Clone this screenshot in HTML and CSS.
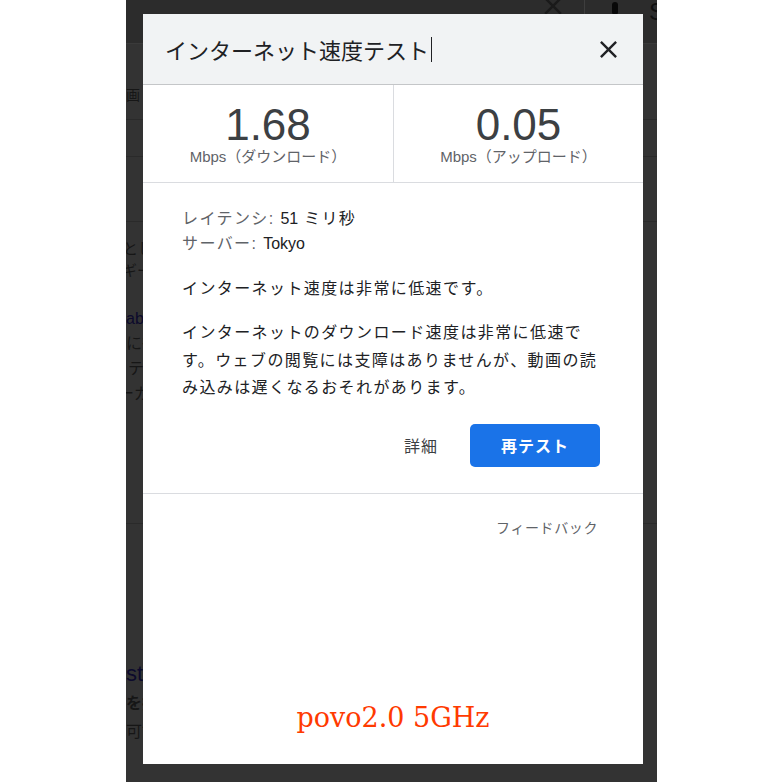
FILE: index.html
```html
<!DOCTYPE html>
<html lang="ja">
<head>
<meta charset="utf-8">
<title>インターネット速度テスト</title>
<link rel="stylesheet" href="styles.css">
</head>
<body>
<div class="frame">
  <div class="stage">
    <div class="page">
      <div class="pg-top">
        <svg class="pg-clear" viewBox="0 0 24 24" width="30" height="30"><path d="M19 6.41L17.59 5 12 10.59 6.41 5 5 6.41 10.59 12 5 17.59 6.41 19 12 13.41 17.59 19 19 17.59 13.41 12z" fill="#1a1a1a"/></svg>
        <span class="pg-divider"></span>
        <svg class="pg-mic" viewBox="0 0 12 20" width="12" height="20"><rect x="3" y="0" width="6" height="13" rx="3" fill="#080808"/></svg>
        <span class="pg-s">S</span>
      </div>
      <div class="pg-tabs"><span class="pg-tab">動画</span></div>
      <div class="pg-row pg-row-a"></div>
      <div class="pg-row pg-row-b"></div>
      <div class="pg-text pg-t1"><span class="cut">ことし</span><br><span class="cut2">ギー</span></div>
      <div class="pg-text pg-t2">
        <span class="pg-link">ab</span><br>
        <span>に彼</span><br>
        <span class="cut3">テ</span><br>
        <span class="cut4">ーガ</span>
      </div>
      <div class="pg-rule"></div>
      <div class="pg-text pg-t3">
        <span class="pg-link pg-big">st</span><br>
        <span class="pg-bold">を推</span><br>
        <span>可能</span>
      </div>
    </div>

    <section class="dialog">
      <header class="dlg-head">
        <h1 class="dlg-title">インターネット速度テスト<span class="caret"></span></h1>
        <svg class="dlg-close" viewBox="0 0 24 24" width="29" height="29"><path d="M19 6.41L17.59 5 12 10.59 6.41 5 5 6.41 10.59 12 5 17.59 6.41 19 12 13.41 17.59 19 19 17.59 13.41 12z" fill="#202124"/></svg>
      </header>

      <div class="stats">
        <div class="stat">
          <div class="num">1.68</div>
          <div class="unit">Mbps（ダウンロード）</div>
        </div>
        <div class="stat">
          <div class="num">0.05</div>
          <div class="unit">Mbps（アップロード）</div>
        </div>
      </div>

      <div class="dlg-body">
        <div class="info">
          <p><span class="lbl">レイテンシ:</span> <span class="lat">51</span> ミリ秒</p>
          <p><span class="lbl">サーバー:</span> <span class="lat">Tokyo</span></p>
        </div>
        <p class="msg">インターネット速度は非常に低速です。</p>
        <p class="msg msg-long">インターネットのダウンロード速度は非常に低速です。ウェブの閲覧には支障はありませんが、動画の読み込みは遅くなるおそれがあります。</p>
        <div class="actions">
          <span class="btn-text">詳細</span>
          <button class="btn-primary">再テスト</button>
        </div>
      </div>

      <div class="dlg-sep"></div>
      <div class="dlg-foot">フィードバック</div>
      <div class="caption">povo2.0 5GHz</div>
    </section>
  </div>
</div>
</body>
</html>
```

FILE: styles.css
```css
* { box-sizing: border-box; }
html, body { margin: 0; padding: 0; background: #fff; }
p, h1 { margin: 0; }

.frame {
  width: 782px;
  height: 782px;
  display: flex;
  padding-left: 126px;
}

.stage {
  position: relative;
  width: 531px;
  height: 782px;
  background: #333333;
  overflow: hidden;
  font-family: "Liberation Sans", "Noto Sans CJK JP", sans-serif;
}

/* dimmed page behind the dialog */
.page {
  display: flex;
  flex-direction: column;
  color: #161616;
}
.pg-top {
  position: relative;
  height: 44px;
  background: #2c2c2c;
  border-bottom: 1px solid #3a3a3a;
}
.pg-clear { position: absolute; left: 412px; top: -9px; }
.pg-divider { position: absolute; left: 458px; top: 0; width: 1px; height: 30px; background: #3e3e3e; }
.pg-mic { position: absolute; left: 483px; top: 2px; }
.pg-s { position: absolute; left: 523px; top: -2px; font-size: 24px; color: #101010; }

.pg-tabs {
  height: 76px;
  border-bottom: 1px solid #2a2a2a;
  font-size: 14px;
  padding-top: 40px;
}
.pg-tab { margin-left: -14px; }
.pg-row { border-bottom: 1px solid #2a2a2a; }
.pg-row-a { height: 37px; }
.pg-row-b { height: 65px; }

.pg-text { font-size: 15px; line-height: 22px; }
.pg-t1 { margin-top: 16px; }
.cut { margin-left: -18px; }
.cut2 { margin-left: -4px; }
.pg-t2 { margin-top: 24px; line-height: 25px; font-size: 16px; }
.pg-link { color: #0c0a2c; }
.cut3 { margin-left: 2px; }
.cut4 { margin-left: -8px; }
.pg-rule { margin-top: 117px; border-top: 1px solid #2a2a2a; }
.pg-t3 { margin-top: 136px; line-height: 28px; font-size: 16px; }
.pg-big { font-size: 22px; }
.pg-bold { font-weight: bold; }

/* dialog */
.dialog {
  position: absolute;
  left: 17px;
  top: 14px;
  width: 500px;
  height: 750px;
  background: #fff;
  color: #202124;
}

.dlg-head {
  height: 71px;
  background: #f1f3f4;
  border-bottom: 1px solid #c4c6c8;
  display: flex;
  align-items: center;
  justify-content: space-between;
  padding: 0 20px 0 22px;
}
.dlg-title {
  font-family: "Noto Sans CJK JP", sans-serif;
  font-weight: normal;
  font-size: 22px;
  line-height: 28px;
  color: #202124;
  display: flex;
  align-items: center;
}
.caret {
  display: inline-block;
  width: 1px;
  height: 25px;
  background: #202124;
  margin-left: 2px;
}
.dlg-close { display: block; }

.stats {
  display: grid;
  grid-template-columns: 1fr 1fr;
  height: 98px;
  border-bottom: 1px solid #dadce0;
}
.stat {
  text-align: center;
  padding-top: 18px;
}
.stat + .stat { border-left: 1px solid #dadce0; }
.num {
  font-size: 44px;
  line-height: 44px;
  color: #3c4043;
}
.unit {
  font-size: 15px;
  line-height: 16px;
  margin-top: 2px;
  color: #5f6368;
}

.dlg-body {
  padding: 23px 43px 0 39px;
  font-size: 16px;
  letter-spacing: 1.4px;
}
.lat { letter-spacing: 0; }
.info p { line-height: 25px; }
.lbl { color: #5f6368; }
.msg { line-height: 27px; margin-top: 19px; }
.msg-long { line-height: 27.5px; margin-top: 17px; }

.actions {
  display: flex;
  justify-content: flex-end;
  align-items: center;
  gap: 32px;
  margin-top: 22px;
}
.btn-text {
  color: #3c4043;
  font-size: 16px;
  letter-spacing: 1px;
}
.btn-primary {
  width: 130px;
  height: 43px;
  border: none;
  border-radius: 5px;
  background: #1a73e8;
  color: #fff;
  font-family: "Liberation Sans", "Noto Sans CJK JP", sans-serif;
  font-size: 16px;
  font-weight: bold;
  letter-spacing: 1px;
  padding: 0;
}

.dlg-sep {
  margin-top: 26px;
  border-top: 1px solid #dadce0;
}
.dlg-foot {
  margin-top: 24px;
  padding-right: 45px;
  text-align: right;
  font-size: 14px;
  line-height: 20px;
  letter-spacing: 0.6px;
  color: #5f6368;
}
.caption {
  margin-top: 163px;
  text-align: center;
  font-family: "DejaVu Serif", serif;
  font-size: 27px;
  line-height: 34px;
  color: #ff3a00;
}
```
